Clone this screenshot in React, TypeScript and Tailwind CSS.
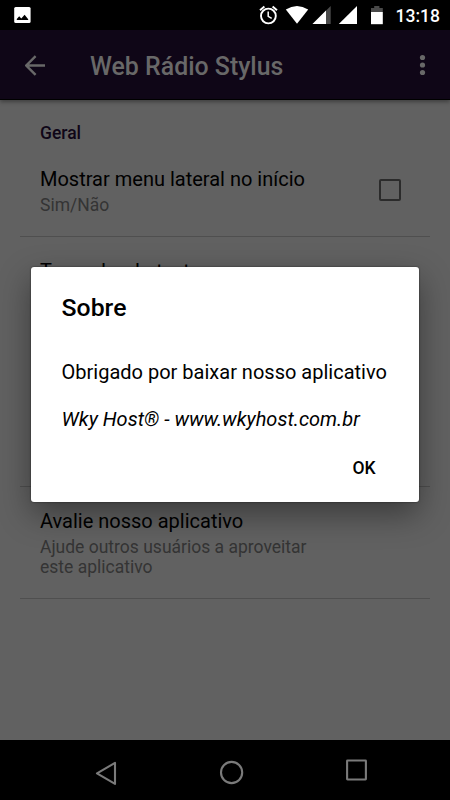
import { useState } from "react";

interface SettingRow {
	title: string;
	summary?: string;
	size: string;
	checkbox?: boolean;
}

const rows: SettingRow[] = [
	{
		title: "Mostrar menu lateral no início",
		summary: "Sim/Não",
		size: "h-[93px] pt-[23px]",
		checkbox: true,
	},
	{
		title: "Tamanho do texto",
		size: "h-[250px] pt-[22px]",
	},
	{
		title: "Avalie nosso aplicativo",
		summary: "Ajude outros usuários a aproveitar este aplicativo",
		size: "h-[112px] pt-[22px]",
	},
];

function StatusBar() {
	return (
		<div className="flex h-[30px] items-center justify-between bg-black pl-[14px] pr-[10px] text-white">
			<svg width="17" height="16" viewBox="0 0 17 16">
				<rect x="0.2" width="16.4" height="16" rx="1.5" fill="white" />
				<path d="M2.8 13V12L5.2 9.3L7.3 11.5L10.6 7.8L14.2 12.2V13Z" fill="black" />
			</svg>
			<div className="flex items-center">
				<svg width="125" height="20" viewBox="258 5 125 20">
					{/* Alarm */}
					<g fill="none" stroke="white">
						<circle cx="268.4" cy="16" r="7.4" strokeWidth="1.9" />
						<path d="M268.2 11.5V16.3L271.7 18.4" strokeWidth="1.5" />
						<path d="M260 10.2L264.4 6.5M277 10.2L272.6 6.5" strokeWidth="1.9" />
					</g>
					{/* Wifi */}
					<path d="M285.8 9.5Q297 2.5 308.2 9.5L297 23.8Z" fill="white" />
					{/* Signal 1 */}
					<path d="M312.5 24L330.7 6V24Z" fill="#4a4a4a" />
					<path d="M312.5 24L326 10.5V24Z" fill="white" />
					{/* Signal 2 */}
					<path d="M338.8 24L357 6V24Z" fill="white" />
					{/* Battery */}
					<path d="M371 12V8H374.2V6H379.4V8H382.8V12Z" fill="#4a4a4a" />
					<path d="M371 12H382.8V24.2H371Z" fill="white" />
				</svg>
				<span className="ml-[12px] w-[45px] pt-[2px] text-right text-[17.5px] leading-[28px] font-medium">
					13:18
				</span>
			</div>
		</div>
	);
}

function Toolbar() {
	return (
		<div className="relative flex h-[70px] items-center border-b border-black bg-[#0f0617] pt-px pl-[25px] pr-[20px] text-[#686868] shadow-[0_2px_4px_rgba(0,0,0,0.35)]">
			<button aria-label="Voltar">
				<svg width="21" height="21" viewBox="0 0 21 21" fill="none" stroke="currentColor" strokeWidth="2.4">
					<path d="M20 10.5H2M10.6 1.2L1.3 10.5L10.6 19.8" />
				</svg>
			</button>
			<h1 className="mt-[3px] ml-[44px] flex-1 text-[24.9px] font-medium">Web Rádio Stylus</h1>
			<button aria-label="Mais opções">
				<svg width="15" height="22" viewBox="0 0 15 22" fill="currentColor">
					<circle cx="7.5" cy="3.5" r="2.6" />
					<circle cx="7.5" cy="11" r="2.6" />
					<circle cx="7.5" cy="18.5" r="2.6" />
				</svg>
			</button>
		</div>
	);
}

function NavBar() {
	return (
		<div className="h-[60px] bg-black">
			<svg width="450" height="60" viewBox="0 0 450 60" fill="none" stroke="#7a7a7a" strokeWidth="2.1" strokeLinejoin="round">
				<path d="M97 33.4L115 22.9V43.9Z" />
				<circle cx="231.6" cy="32.5" r="10.6" />
				<rect x="347.1" y="20.5" width="18.8" height="19" rx="0.4" />
			</svg>
		</div>
	);
}

export default function App() {
	const [checked, setChecked] = useState(false);
	const [open, setOpen] = useState(true);

	return (
		<div className="relative flex h-[800px] w-[450px] flex-col overflow-hidden bg-[#616161] font-[Roboto,sans-serif]">
			<StatusBar />
			<Toolbar />

			{/* Settings */}
			<div className="flex-1 px-5">
				<h2 className="flex h-[44px] items-end px-5 pb-px text-[17.5px] leading-[20px] font-medium text-[#0f0617]">
					Geral
				</h2>
				{rows.map(row => (
					<div
						key={row.title}
						className={`flex items-start justify-between border-b border-[#4f4f4f] px-5 ${row.size}`}
					>
						<div className="max-w-[290px]">
							<p className="text-[20px] leading-[24px] text-black">{row.title}</p>
							{row.summary && (
								<p className="mt-[4px] text-[17.5px] leading-[20px] text-[#343434]">
									{row.summary}
								</p>
							)}
						</div>
						{row.checkbox && (
							<button
								role="checkbox"
								aria-checked={checked}
								aria-label={row.title}
								onClick={() => setChecked(!checked)}
								className="mt-[12px] mr-[9px] size-[22px] rounded-[2px] border-2 border-[#2b2b2b]"
							/>
						)}
					</div>
				))}
			</div>

			<NavBar />

			{/* About dialog */}
			{open && (
				<div
					role="dialog"
					className="absolute top-[267px] left-[31px] flex h-[235px] w-[388px] flex-col rounded-[3px] bg-white pt-[26px] pr-[30px] pl-[30.6px] text-black shadow-[0_0_2px_rgba(0,0,0,0.6),0_12px_32px_rgba(0,0,0,0.4)]"
				>
					<h2 className="text-[24.8px] leading-[30px] font-medium">Sobre</h2>
					<p className="mt-[37px] text-[20px] leading-[24px] whitespace-nowrap">
						Obrigado por baixar nosso aplicativo
					</p>
					<p className="mt-[23px] text-[20px] leading-[24px] whitespace-nowrap italic">
						Wky Host® - www.wkyhost.com.br
					</p>
					<button
						onClick={() => setOpen(false)}
						className="mt-[27px] mr-[13.5px] self-end text-[17.5px] leading-[20px] font-medium"
					>
						OK
					</button>
				</div>
			)}
		</div>
	);
}
